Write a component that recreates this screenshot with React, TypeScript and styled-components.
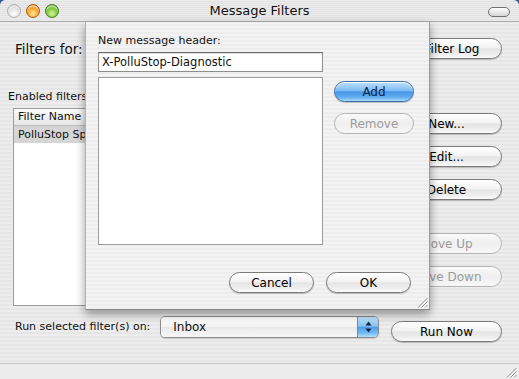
import React from "react";
import styled, { createGlobalStyle, css } from "styled-components";

const GlobalStyle = createGlobalStyle`
  html, body { margin: 0; padding: 0; background: #3a5d96; }
  body { font-family: "DejaVu Sans", "Liberation Sans", sans-serif; }
  * { box-sizing: border-box; }
`;

const Window = styled.div`
  width: 519px;
  height: 379px;
  display: flex;
  flex-direction: column;
  border-radius: 6px 6px 0 0;
  overflow: hidden;
  background: #e9e9e9;
`;

const TitleBar = styled.div`
  position: relative;
  height: 22px;
  flex: none;
  display: flex;
  align-items: center;
  background: repeating-linear-gradient(to bottom, #ececec 0 1px, #e2e2e2 1px 2px);
  border-bottom: 1px solid #a9a9a9;
  padding-left: 7px;
`;

const Lights = styled.div`
  display: flex;
  gap: 5px;
`;

const lightColors = {
  grey: ["#ffffff", "#e0e0e0", "#b0b0b0"],
  orange: ["#ffe6a0", "#f5a122", "#b3560a"],
  green: ["#d8f5a0", "#79c431", "#3b7d12"],
} as const;

const Light = styled.span<{ $tone: keyof typeof lightColors }>`
  width: 14px;
  height: 14px;
  border-radius: 50%;
  border: 1px solid ${(p) => lightColors[p.$tone][2]};
  background: radial-gradient(circle at 50% 72%, ${(p) => lightColors[p.$tone][0]} 0%, ${(p) => lightColors[p.$tone][1]} 55%, ${(p) => lightColors[p.$tone][2]} 100%);
  box-shadow: inset 0 2px 1px rgba(255, 255, 255, 0.6);
`;

const Title = styled.div`
  position: absolute;
  left: 0;
  right: 0;
  text-align: center;
  font-size: 13px;
  color: #111;
  pointer-events: none;
`;

const ToolbarPill = styled.span`
  position: absolute;
  right: 9px;
  top: 7px;
  width: 22px;
  height: 10px;
  border-radius: 5px;
  border: 1px solid #707070;
  background: linear-gradient(#ffffff, #d6d6d6);
`;

const Body = styled.div`
  position: relative;
  flex: 1;
  display: flex;
  flex-direction: column;
  background: repeating-linear-gradient(to bottom, #ededed 0 2px, #e6e6e6 2px 4px);
`;

const TopRow = styled.div`
  display: flex;
  align-items: center;
  justify-content: space-between;
  margin-top: 16px;
  padding: 0 17px 0 15px;
`;

const Label = styled.span<{ $size?: number }>`
  font-size: ${(p) => p.$size ?? 11}px;
  color: #111;
  white-space: nowrap;
`;

const AquaButton = styled.button<{ $w: number; $variant?: "default" | "disabled" }>`
  width: ${(p) => p.$w}px;
  height: 21px;
  flex: none;
  padding: 0;
  border-radius: 11px;
  border: 1px solid #7a7a7a;
  font-family: "DejaVu Sans", sans-serif;
  font-size: 12px;
  color: #000;
  background: linear-gradient(to bottom, #ffffff 0%, #f3f3f3 45%, #e4e4e4 52%, #eeeeee 80%, #fbfbfb 100%);
  box-shadow: 0 1px 1px rgba(0, 0, 0, 0.22), inset 0 1px 0 #fff;
  white-space: nowrap;
  overflow: hidden;
  ${(p) =>
    p.$variant === "default" &&
    css`
      border-color: #3d6ea6;
      color: #0b2340;
      background: linear-gradient(to bottom, #bfe0fc 0%, #7fbdf4 45%, #4597e6 52%, #62adf0 80%, #a6dcfd 100%);
    `}
  ${(p) =>
    p.$variant === "disabled" &&
    css`
      border-color: #b4b4b4;
      color: #9c9c9c;
      box-shadow: none;
      background: linear-gradient(to bottom, #fafafa, #efefef 50%, #f7f7f7);
    `}
`;

const Middle = styled.div`
  display: flex;
  gap: 13px;
  margin-top: 31px;
  padding: 0 17px 0 8px;
`;

const FiltersPane = styled.div`
  flex: 1;
  display: flex;
  flex-direction: column;
  gap: 5px;
`;

const Table = styled.div`
  margin-left: 5px;
  height: 198px;
  background: #fff;
  border: 1px solid #9c9c9c;
  display: flex;
  flex-direction: column;
`;

const TableHeader = styled.div`
  height: 17px;
  padding-left: 4px;
  font-size: 11px;
  line-height: 16px;
  color: #111;
  background: linear-gradient(#fbfbfb, #e6e6e6);
  border-bottom: 1px solid #bdbdbd;
`;

const TableRow = styled.div<{ $selected?: boolean }>`
  height: 17px;
  padding-left: 4px;
  font-size: 11px;
  line-height: 17px;
  color: #111;
  white-space: nowrap;
  background: ${(p) => (p.$selected ? "#d5d5d5" : "transparent")};
`;

const ButtonColumn = styled.div`
  display: flex;
  flex-direction: column;
  gap: 33px;
  padding-top: 23px;
`;

const ButtonGroup = styled.div`
  display: flex;
  flex-direction: column;
  gap: 12px;
`;

const BottomRow = styled.div`
  display: flex;
  align-items: flex-start;
  margin-top: 10px;
  padding: 0 17px 0 15px;
`;

const RunLabel = styled(Label)`
  line-height: 22px;
  margin-right: 10px;
`;

const Popup = styled.div`
  width: 219px;
  height: 22px;
  display: flex;
  border: 1px solid #8c8c8c;
  border-radius: 5px;
  overflow: hidden;
  box-shadow: 0 1px 1px rgba(0, 0, 0, 0.15);
`;

const PopupValue = styled.span`
  flex: 1;
  padding-left: 12px;
  font-size: 12px;
  line-height: 20px;
  color: #111;
  background: linear-gradient(#ffffff, #f2f2f2 50%, #e9e9e9 52%, #f8f8f8);
`;

const PopupArrows = styled.span`
  width: 21px;
  display: flex;
  align-items: center;
  justify-content: center;
  border-left: 1px solid #5d8ec4;
  background: linear-gradient(to bottom, #c6e4fc 0%, #86c2f5 45%, #4f9fe8 52%, #73b9f3 80%, #b2e0fd 100%);
`;

const RunNow = styled(AquaButton)`
  margin-left: 12px;
  margin-top: 5px;
`;

const StatusBar = styled.div`
  margin-top: auto;
  height: 16px;
  display: flex;
  justify-content: flex-end;
  align-items: flex-end;
  border-top: 1px solid #c4c4c4;
  background: #ececec;
  padding: 0 2px 1px 0;
`;

const Sheet = styled.div`
  position: absolute;
  top: 0;
  left: 85px;
  width: 345px;
  height: 288px;
  display: flex;
  flex-direction: column;
  padding: 12px 18px 0 12px;
  background: repeating-linear-gradient(to bottom, #f3f3f3 0 2px, #ededed 2px 4px);
  border-left: 1px solid #b3b3b3;
  border-right: 1px solid #9a9a9a;
  border-bottom: 1px solid #8a8a8a;
  box-shadow: 0 4px 9px rgba(0, 0, 0, 0.4);
`;

const SheetGrid = styled.div`
  display: grid;
  grid-template-columns: 225px 80px;
  column-gap: 11px;
  grid-template-rows: 14px 20px 169px;
  row-gap: 4px;
`;

const SheetLabel = styled(Label)`
  grid-column: 1 / span 2;
`;

const TextField = styled.div`
  grid-column: 1;
  border: 1px solid #8e8e8e;
  border-top-color: #6d6d6d;
  background: #fff;
  padding-left: 3px;
  font-size: 11.5px;
  line-height: 18px;
  color: #111;
  box-shadow: inset 0 1px 1px rgba(0, 0, 0, 0.15);
`;

const ListBox = styled.div`
  grid-column: 1;
  margin-top: 1px;
  background: #fff;
  border: 1px solid #9c9c9c;
`;

const SideButtons = styled.div`
  grid-column: 2;
  display: flex;
  flex-direction: column;
  gap: 11px;
  padding-top: 5px;
`;

const SheetFooter = styled.div`
  display: flex;
  justify-content: flex-end;
  gap: 12px;
  margin-top: 27px;
`;

const SheetGrip = styled.span`
  position: absolute;
  right: 1px;
  bottom: 1px;
  display: flex;
`;

const Grip = () => (
  <svg width="11" height="11" viewBox="0 0 11 11">
    <g stroke="#8d8d8d" strokeWidth="1">
      <line x1="10.5" y1="1" x2="1" y2="10.5" />
      <line x1="10.5" y1="4.5" x2="4.5" y2="10.5" />
      <line x1="10.5" y1="8" x2="8" y2="10.5" />
    </g>
    <g stroke="#ffffff" strokeWidth="1">
      <line x1="10.5" y1="2.5" x2="2.5" y2="10.5" />
      <line x1="10.5" y1="6" x2="6" y2="10.5" />
    </g>
  </svg>
);

const Arrows = () => (
  <svg width="7" height="12" viewBox="0 0 7 12">
    <path d="M3.5 0.5 L6.5 4.5 L0.5 4.5 Z" fill="#10233f" />
    <path d="M3.5 11.5 L6.5 7.5 L0.5 7.5 Z" fill="#10233f" />
  </svg>
);

export default function App() {
  return (
    <>
      <GlobalStyle />
      <Window>
        <TitleBar>
          <Lights>
            <Light $tone="grey" />
            <Light $tone="orange" />
            <Light $tone="green" />
          </Lights>
          <Title>Message Filters</Title>
          <ToolbarPill />
        </TitleBar>
        <Body>
          <TopRow>
            <Label $size={13.5}>Filters for:</Label>
            <AquaButton $w={100}>Filter Log</AquaButton>
          </TopRow>
          <Middle>
            <FiltersPane>
              <Label>Enabled filters</Label>
              <Table>
                <TableHeader>Filter Name</TableHeader>
                <TableRow $selected>PolluStop Spam Filter</TableRow>
              </Table>
            </FiltersPane>
            <ButtonColumn>
              <ButtonGroup>
                <AquaButton $w={111}>New...</AquaButton>
                <AquaButton $w={111}>Edit...</AquaButton>
                <AquaButton $w={111}>Delete</AquaButton>
              </ButtonGroup>
              <ButtonGroup>
                <AquaButton $w={111} $variant="disabled">Move Up</AquaButton>
                <AquaButton $w={111} $variant="disabled">Move Down</AquaButton>
              </ButtonGroup>
            </ButtonColumn>
          </Middle>
          <BottomRow>
            <RunLabel>Run selected filter(s) on:</RunLabel>
            <Popup>
              <PopupValue>Inbox</PopupValue>
              <PopupArrows>
                <Arrows />
              </PopupArrows>
            </Popup>
            <RunNow $w={111}>Run Now</RunNow>
          </BottomRow>
          <StatusBar>
            <Grip />
          </StatusBar>
          <Sheet>
            <SheetGrid>
              <SheetLabel>New message header:</SheetLabel>
              <TextField>X-PolluStop-Diagnostic</TextField>
              <span />
              <ListBox />
              <SideButtons>
                <AquaButton $w={80} $variant="default">Add</AquaButton>
                <AquaButton $w={80} $variant="disabled">Remove</AquaButton>
              </SideButtons>
            </SheetGrid>
            <SheetFooter>
              <AquaButton $w={85}>Cancel</AquaButton>
              <AquaButton $w={85}>OK</AquaButton>
            </SheetFooter>
            <SheetGrip>
              <Grip />
            </SheetGrip>
          </Sheet>
        </Body>
      </Window>
    </>
  );
}
